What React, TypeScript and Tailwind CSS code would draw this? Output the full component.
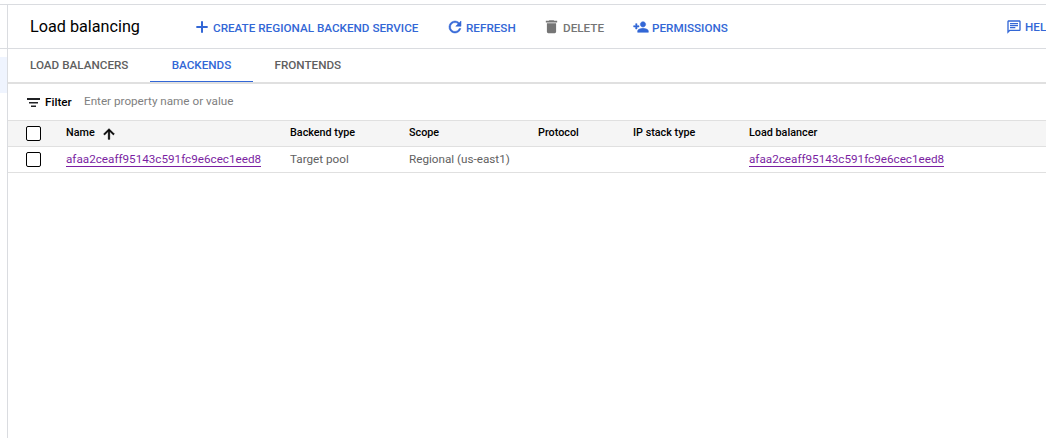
import type { ReactNode } from "react";

function Icon({ d, className }: { d: string; className: string }) {
  return (
    <svg viewBox="0 0 24 24" fill="currentColor" className={`shrink-0 ${className}`} aria-hidden="true">
      <path d={d} />
    </svg>
  );
}

const ADD = "M20.500 13.500h-7V20.500h-3v-7h-7v-3h7v-7h3v7h7z";
const REFRESH =
  "M17.650 6.350A7.958 7.958 0 0 0 12 4a8 8 0 1 0 7.730 10h-2.080A5.990 5.990 0 0 1 12 18a6 6 0 1 1 0-12c1.660 0 3.140.690 4.220 1.780L13 11h7V4z";
const TRASH = "M5.500 19.500c0 1.100.900 2 2 2h9c1.100 0 2-.900 2-2V7.500h-13zM20 4h-4l-1-1H9L8 4H4v2.500h16z";
const PERSON_ADD =
  "M15 12c2.210 0 4-1.790 4-4s-1.790-4-4-4-4 1.790-4 4 1.790 4 4 4zm-9-2V7H4v3H1v2h3v3h2v-3h3v-2zm9 4c-2.670 0-8 1.340-8 4v2h16v-2c0-2.660-5.330-4-8-4z";
const CHAT =
  "M4 4h16v12H5.170L4 17.170zm0-2c-1.100 0-1.990.900-1.990 2L2 22l4-4h14c1.100 0 2-.900 2-2V4c0-1.100-.900-2-2-2zm2 10h8v2H6zm0-3h12v2H6zm0-3h12v2H6z";
const ARROW_UP = "M4 12l1.410 1.410L11 7.830V20h2V7.830l5.580 5.590L20 12l-8-8z";

function Checkbox() {
  return <span className="block size-[15px] rounded-[2px] border border-black bg-white" />;
}

function HeaderCell({ children, className }: { children?: ReactNode; className: string }) {
  return <div className={`shrink-0 whitespace-nowrap text-[10.8px] font-medium text-black ${className}`}>{children}</div>;
}

function ResourceLink({ children }: { children: string }) {
  return (
    <a href="#" className="block h-[15px] w-max border-b border-[#7b1fa2] text-[11.7px] leading-[15px] text-[#7b1fa2]">
      {children}
    </a>
  );
}

const ID = "afaa2ceaff95143c591fc9e6cec1eed8";

export default function App() {
  return (
    <div className="flex h-[438px] w-full flex-col overflow-hidden bg-white pt-1 font-[Roboto,sans-serif] text-[#202124]">
      <div className="flex min-h-0 flex-1 border-t border-[#dadce0]">
        <aside className="flex w-2 shrink-0 flex-col border-r border-[#dadce0]">
          <div className="h-[43px]" />
          <div className="border-t border-[#dadce0]" />
          <div className="mt-2 h-9 bg-[#eff4fe]" />
        </aside>
        <main className="min-w-0 flex-1 overflow-hidden">
          <header className="flex h-11 items-center overflow-hidden whitespace-nowrap border-b border-[#dadce0] text-[11.7px] font-medium leading-[18px] text-[#3367d6]">
            <h1 className="w-[186px] shrink-0 pl-[22px] pt-px text-[16.2px] font-normal leading-6 text-black">Load balancing</h1>
            <button className="flex h-[22px] w-[252px] shrink-0 items-center gap-[3px]">
              <Icon d={ADD} className="size-4" />
              <span className="pt-[3px]">CREATE REGIONAL BACKEND SERVICE</span>
            </button>
            <button className="flex h-[22px] w-[97px] shrink-0 items-center gap-[2px]">
              <svg viewBox="0 0 24 24" className="size-[18px] shrink-0" fill="currentColor" stroke="currentColor" strokeWidth="0.7" aria-hidden="true">
                <path d={REFRESH} />
              </svg>
              <span className="pt-[3px]">REFRESH</span>
            </button>
            <button className="flex h-[22px] w-[90px] shrink-0 items-center gap-[3px] text-[#757575]">
              <Icon d={TRASH} className="size-[17px]" />
              <span className="pt-[3px]">DELETE</span>
            </button>
            <button className="flex h-[22px] w-[373px] shrink-0 items-center gap-[3px]">
              <svg viewBox="0 0 24 24" className="size-4 shrink-0" fill="currentColor" stroke="currentColor" strokeWidth="0.8" aria-hidden="true">
                <path d={PERSON_ADD} />
              </svg>
              <span className="pt-[3px]">PERMISSIONS</span>
            </button>
            <button className="flex h-[22px] shrink-0 items-center gap-[3px]">
              <Icon d={CHAT} className="size-4" />
              <span className="pt-px">HELP ASSISTANT</span>
            </button>
          </header>
          <nav className="flex h-[35px] whitespace-nowrap border-b-2 border-[#e0e0e0] text-[11.7px] font-medium text-[#5f5f5f]">
            <button className="flex h-[33px] w-[142px] items-start pl-[22px] leading-[33px]">LOAD BALANCERS</button>
            <button className="flex h-[33px] w-[103px] items-start justify-center border-b border-[#3367d6] leading-[33px] text-[#3367d6]">
              BACKENDS
            </button>
            <button className="flex h-[33px] w-[110px] items-start pl-[21.500px] leading-[33px]">FRONTENDS</button>
          </nav>
          <div className="flex h-9 items-center pl-[19px] text-[11.7px]">
            <svg viewBox="0 0 13 9" className="h-[9px] w-[13px] shrink-0" fill="#202124" aria-hidden="true">
              <path d="M0 0h13v2H0zM2 4h9v1.500H2zM4 7.500h5V9H4z" />
            </svg>
            <span className="ml-[5px] w-[39px] pt-px font-medium text-black">Filter</span>
            <span className="text-[#808080]">Enter property name or value</span>
          </div>
          <div className="flex h-[27px] items-center border-y border-[#e0e0e0] bg-[#f5f5f5]">
            <div className="w-[58px] shrink-0 pl-[18px]">
              <Checkbox />
            </div>
            <HeaderCell className="flex w-[224px] items-center gap-[6px]">
              <span className="pb-px">Name</span>
              <svg viewBox="0 0 24 24" className="size-4 shrink-0" fill="black" stroke="black" strokeWidth="1" aria-hidden="true">
                <path d={ARROW_UP} />
              </svg>
            </HeaderCell>
            <HeaderCell className="w-[119px]">Backend type</HeaderCell>
            <HeaderCell className="w-[129px]">Scope</HeaderCell>
            <HeaderCell className="w-[95px]">Protocol</HeaderCell>
            <HeaderCell className="w-[116px]">IP stack type</HeaderCell>
            <HeaderCell className="w-[297px]">Load balancer</HeaderCell>
          </div>
          <div className="flex h-[26px] items-center whitespace-nowrap border-b border-[#e0e0e0] text-[11.7px] text-[#616161]">
            <div className="w-[58px] shrink-0 pl-[18px]">
              <Checkbox />
            </div>
            <div className="w-[224px] shrink-0">
              <ResourceLink>{ID}</ResourceLink>
            </div>
            <div className="w-[119px] shrink-0">Target pool</div>
            <div className="w-[340px] shrink-0">Regional (us-east1)</div>
            <div className="w-[297px] shrink-0">
              <ResourceLink>{ID}</ResourceLink>
            </div>
          </div>
        </main>
      </div>
    </div>
  );
}
